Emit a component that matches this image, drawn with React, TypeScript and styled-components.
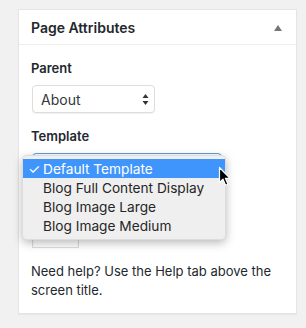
import React from "react";
import styled, { createGlobalStyle } from "styled-components";

const Global = createGlobalStyle`
  html, body { margin: 0; padding: 0; background: #f1f1f1; }
  body { font-family: Inter, "Noto Sans", sans-serif; color: #23282d; }
  * { box-sizing: border-box; }
`;

const Page = styled.div`
  width: 306px;
  height: 328px;
  padding: 9px 0 0 18px;
  position: relative;
  overflow: hidden;
`;

const Panel = styled.div`
  width: 279px;
  background: #fff;
  border: 1px solid #e5e5e5;
  box-shadow: 0 1px 1px rgba(0, 0, 0, 0.04);
`;

const Header = styled.div`
  height: 35px;
  border-bottom: 1px solid #eee;
  display: flex;
  align-items: center;
  justify-content: space-between;
  padding: 1px 12px 0;
`;

const Title = styled.h2`
  margin: 0;
  font-size: 14px;
  font-weight: 600;
  color: #23282d;
`;

const Toggle = styled.span`
  width: 0;
  height: 0;
  border-left: 4px solid transparent;
  border-right: 4px solid transparent;
  border-bottom: 6px solid #72777c;
  margin-right: 2px;
`;

const Inside = styled.div`
  padding: 14px 12px 13px;
  display: flex;
  flex-direction: column;
  align-items: flex-start;
`;

const Label = styled.p`
  margin: 0 0 7px;
  font-size: 13px;
  line-height: 19px;
  font-weight: 600;
`;

const Select = styled.div<{ $w: number; $focus?: boolean }>`
  width: ${(p) => p.$w}px;
  height: 28px;
  margin: 0 0 14px 1px;
  border: 1px solid ${(p) => (p.$focus ? "#5b9dd9" : "#ddd")};
  border-radius: 4px;
  background: #fff;
  box-shadow: 0 1px 1px rgba(0, 0, 0, 0.06);
  display: flex;
  align-items: center;
  justify-content: space-between;
  padding: 0 5px 0 8px;
  font-size: 14px;
  color: #32373c;
`;

const Arrows = styled.svg`
  width: 7px;
  height: 13px;
`;

const NumberInput = styled.div`
  width: 47px;
  height: 27px;
  margin: 0 0 14px 1px;
  border: 1px solid #ddd;
  box-shadow: inset 0 1px 2px rgba(0, 0, 0, 0.07);
  font-size: 14px;
  padding: 3px 7px;
  color: #32373c;
`;

const Help = styled.p`
  margin: 0;
  font-size: 13px;
  line-height: 19px;
  color: #23282d;
`;

const Menu = styled.ul`
  position: absolute;
  left: 22px;
  top: 155px;
  width: 204px;
  margin: 0;
  padding: 3px 0 4px;
  list-style: none;
  background: #efefef;
  border-radius: 5px;
  border: 1px solid rgba(0, 0, 0, 0.08);
  box-shadow: 0 3px 10px rgba(0, 0, 0, 0.28);
`;

const Item = styled.li<{ $active?: boolean }>`
  height: 19px;
  display: flex;
  align-items: center;
  font-size: 13.7px;
  color: ${(p) => (p.$active ? "#fff" : "#262626")};
  background: ${(p) => (p.$active ? "#3f95fc" : "transparent")};
`;

const Check = styled.span`
  width: 20px;
  padding-left: 5px;
  font-size: 14px;
  font-weight: 400;
`;

const Cursor = styled.svg`
  position: absolute;
  left: 218px;
  top: 166px;
  width: 14px;
  height: 21px;
`;

const options = [
  "Default Template",
  "Blog Full Content Display",
  "Blog Image Large",
  "Blog Image Medium",
];

export default function App() {
  return (
    <Page>
      <Global />
      <Panel>
        <Header>
          <Title>Page Attributes</Title>
          <Toggle />
        </Header>
        <Inside>
          <Label>Parent</Label>
          <Select $w={123}>
            About
            <Arrows viewBox="0 0 7 13">
              <path d="M3.5 1 L6.5 5 L0.5 5 Z" fill="#333" />
              <path d="M3.5 12 L6.5 8 L0.5 8 Z" fill="#333" />
            </Arrows>
          </Select>
          <Label>Template</Label>
          <Select $w={190} $focus>
            Default Template
            <Arrows viewBox="0 0 7 13">
              <path d="M3.5 1 L6.5 5 L0.5 5 Z" fill="#333" />
              <path d="M3.5 12 L6.5 8 L0.5 8 Z" fill="#333" />
            </Arrows>
          </Select>
          <Label>Order</Label>
          <NumberInput>0</NumberInput>
          <Help>Need help? Use the Help tab above the screen title.</Help>
        </Inside>
      </Panel>
      <Menu>
        {options.map((o, i) => (
          <Item key={o} $active={i === 0}>
            <Check>{i === 0 ? "✓" : ""}</Check>
            {o}
          </Item>
        ))}
      </Menu>
      <Cursor viewBox="0 0 14 21">
        <path
          d="M1.5 1.5 L1.5 16.5 L5 13.2 L7.6 19.2 L10 18.2 L7.4 12.3 L12 12.3 Z"
          fill="#000"
          stroke="#fff"
          strokeWidth="1.2"
          strokeLinejoin="round"
        />
      </Cursor>
    </Page>
  );
}
